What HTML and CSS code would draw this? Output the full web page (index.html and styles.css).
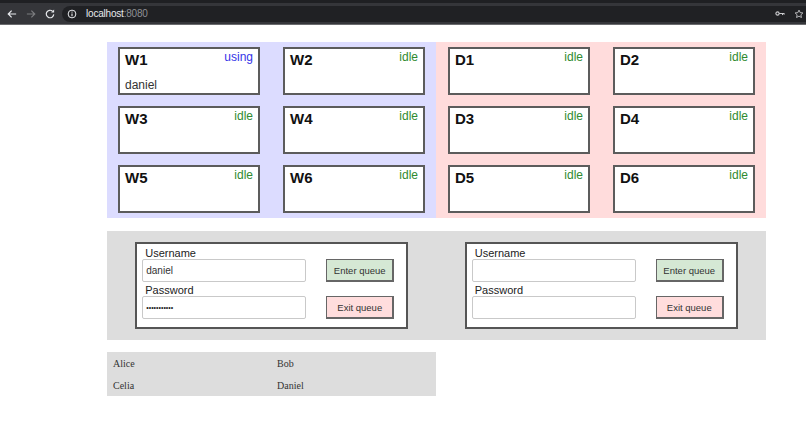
FILE: index.html
```html
<!DOCTYPE html>
<html lang="en">
<head>
<meta charset="utf-8">
<title>Queue</title>
<link rel="stylesheet" href="styles.css">
</head>
<body>
<header class="chrome">
  <div class="nav">
    <svg class="nav-icon" viewBox="0 0 16 16"><path d="M13.5 8H3M7.5 3.5L3 8l4.5 4.5" fill="none" stroke="#e8eaed" stroke-width="1.6"/></svg>
    <svg class="nav-icon" viewBox="0 0 16 16"><path d="M2.5 8H13M8.5 3.5L13 8l-4.5 4.5" fill="none" stroke="#7b7c7f" stroke-width="1.6"/></svg>
    <svg class="nav-icon" viewBox="0 0 16 16"><path d="M13 8.5a5 5 0 1 1-1.6-4.2" fill="none" stroke="#e8eaed" stroke-width="1.6"/><path d="M13.5 2v4h-4z" fill="#e8eaed"/></svg>
  </div>
  <div class="omnibox">
    <svg class="info-icon" viewBox="0 0 16 16"><circle cx="8" cy="8" r="6.2" fill="none" stroke="#e8eaed" stroke-width="1.6"/><path d="M8 7v4.5" stroke="#e8eaed" stroke-width="1.8"/><circle cx="8" cy="4.8" r="1" fill="#e8eaed"/></svg>
    <span class="url"><span class="host">localhost</span><span class="port">:8080</span></span>
    <span class="omni-spacer"></span>
    <svg class="key-icon" viewBox="0 0 16 10"><circle cx="4" cy="5" r="2.6" fill="none" stroke="#c8c9cc" stroke-width="1.8"/><path d="M6.5 5H15M12 5v2.5M14.5 5v2" stroke="#c8c9cc" stroke-width="1.6"/></svg>
    <svg class="star-icon" viewBox="0 0 16 16"><path d="M8 1.8l1.9 4 4.3.5-3.2 3 .9 4.3L8 11.4l-3.9 2.2.9-4.3-3.2-3 4.3-.5z" fill="none" stroke="#c8c9cc" stroke-width="1.4" stroke-linejoin="round"/></svg>
  </div>
</header>

<main class="page">
  <section class="rooms">
    <div class="zone zone-w">
      <div class="card"><div class="card-head"><span class="card-name">W1</span><span class="card-status using">using</span></div><div class="card-user">daniel</div></div>
      <div class="card"><div class="card-head"><span class="card-name">W2</span><span class="card-status idle">idle</span></div></div>
      <div class="card"><div class="card-head"><span class="card-name">W3</span><span class="card-status idle">idle</span></div></div>
      <div class="card"><div class="card-head"><span class="card-name">W4</span><span class="card-status idle">idle</span></div></div>
      <div class="card"><div class="card-head"><span class="card-name">W5</span><span class="card-status idle">idle</span></div></div>
      <div class="card"><div class="card-head"><span class="card-name">W6</span><span class="card-status idle">idle</span></div></div>
    </div>
    <div class="zone zone-d">
      <div class="card"><div class="card-head"><span class="card-name">D1</span><span class="card-status idle">idle</span></div></div>
      <div class="card"><div class="card-head"><span class="card-name">D2</span><span class="card-status idle">idle</span></div></div>
      <div class="card"><div class="card-head"><span class="card-name">D3</span><span class="card-status idle">idle</span></div></div>
      <div class="card"><div class="card-head"><span class="card-name">D4</span><span class="card-status idle">idle</span></div></div>
      <div class="card"><div class="card-head"><span class="card-name">D5</span><span class="card-status idle">idle</span></div></div>
      <div class="card"><div class="card-head"><span class="card-name">D6</span><span class="card-status idle">idle</span></div></div>
    </div>
  </section>

  <section class="forms">
    <div class="slot">
      <form class="login">
        <label class="field-label">Username</label>
        <input class="field" type="text" value="daniel">
        <label class="field-label pw-label">Password</label>
        <input class="field field-pw" type="password" value="secretpassw">
        <button type="button" class="btn btn-enter">Enter queue</button>
        <button type="button" class="btn btn-exit">Exit queue</button>
      </form>
    </div>
    <div class="slot">
      <form class="login">
        <label class="field-label">Username</label>
        <input class="field" type="text" value="">
        <label class="field-label pw-label">Password</label>
        <input class="field field-pw" type="password" value="">
        <button type="button" class="btn btn-enter">Enter queue</button>
        <button type="button" class="btn btn-exit">Exit queue</button>
      </form>
    </div>
  </section>

  <section class="users">
    <div class="user">Alice</div>
    <div class="user">Bob</div>
    <div class="user">Celia</div>
    <div class="user">Daniel</div>
  </section>
</main>
</body>
</html>
```

FILE: styles.css
```css
* { box-sizing: border-box; }

html, body {
  margin: 0;
  padding: 0;
  background: #ffffff;
  font-family: "Liberation Sans", Arial, sans-serif;
}

/* browser chrome */
.chrome {
  height: 25px;
  display: flex;
  align-items: center;
  background: #35363a;
  border-top: 3px solid #1f2023;
  border-bottom: 1px solid #6a6b6e;
}

.nav {
  display: flex;
  align-items: center;
  gap: 7px;
  padding-left: 6px;
  width: 62px;
}

.nav-icon {
  width: 12px;
  height: 12px;
}

.omnibox {
  flex: 1;
  height: 16px;
  display: flex;
  align-items: center;
  background: #202124;
  border-radius: 8px 0 0 8px;
  padding-left: 5px;
}

.info-icon {
  width: 10px;
  height: 10px;
}

.url {
  margin-left: 9px;
  font-size: 10px;
  line-height: 12px;
  letter-spacing: -0.2px;
}

.host { color: #e8eaed; }
.port { color: #8e9094; }

.omni-spacer { flex: 1; }

.key-icon {
  width: 10px;
  height: 7px;
  margin-right: 9px;
}

.star-icon {
  width: 10px;
  height: 10px;
  margin-right: 2px;
}

/* page */
.page {
  padding: 17px 0 0 107px;
  width: 766px;
}

.rooms {
  display: flex;
  height: 176px;
}

.zone {
  display: grid;
  grid-template-columns: 142px 142px;
  grid-auto-rows: 48px;
  column-gap: 23px;
  row-gap: 11px;
  padding: 5px 11px 5px 11px;
}

.zone-w {
  width: 329px;
  background: #dcdcff;
}

.zone-d {
  width: 330px;
  padding-left: 12px;
  background: #ffdcdc;
}

.card {
  background: #ffffff;
  border: 2px solid #5c5c5c;
  padding: 2px 5px 1px 5px;
  display: flex;
  flex-direction: column;
  justify-content: space-between;
}

.card-head {
  display: flex;
  justify-content: space-between;
  align-items: flex-start;
}

.card-name {
  font-size: 15px;
  line-height: 18px;
  font-weight: 700;
  color: #111;
}

.card-status {
  font-size: 12px;
  line-height: 14px;
  margin-top: -1px;
}

.using { color: #3434e8; }
.idle { color: #2f8a2f; }

.card-user {
  font-size: 12px;
  line-height: 14px;
  color: #333;
}

/* login forms */
.forms {
  margin-top: 13px;
  display: flex;
  background: #dddddd;
  padding: 11px 0;
}

.slot {
  flex: 1;
  display: flex;
  justify-content: center;
}

.login {
  margin: 0;
  display: grid;
  grid-template-columns: 164px 68px;
  column-gap: 20px;
  padding: 4px 12px 8px 5px;
  border: 2px solid #555;
  background: #ffffff;
}

.field-label {
  grid-column: 1;
  font-size: 11px;
  line-height: 11px;
  color: #222;
  padding-left: 3px;
}

.pw-label {
  margin-top: 3px;
}

.field {
  grid-column: 1;
  height: 23px;
  width: 164px;
  margin: 0;
  border: 1px solid #c9c9c9;
  border-radius: 2px;
  padding: 0 3px;
  font-family: "Liberation Sans", Arial, sans-serif;
  font-size: 10px;
  color: #333;
  background: #fff;
}

.field-pw {
  font-size: 7px;
  color: #222;
}

.btn {
  grid-column: 2;
  height: 23px;
  width: 68px;
  margin: 0;
  padding: 0;
  border: 1px solid #666;
  border-width: 1px 2px 2px 1px;
  font-family: "Liberation Sans", Arial, sans-serif;
  font-size: 9.5px;
  color: #333;
}

.btn-enter {
  grid-row: 2;
  background: #d5e8d4;
}

.btn-exit {
  grid-row: 4;
  background: #ffdddd;
}

/* users */
.users {
  margin-top: 12px;
  width: 329px;
  background: #dddddd;
  display: grid;
  grid-template-columns: 164px 159px;
  grid-auto-rows: 22px;
  padding-left: 6px;
}

.user {
  display: flex;
  align-items: center;
  font-family: "Liberation Serif", "Times New Roman", serif;
  font-size: 10px;
  color: #333;
}
```
